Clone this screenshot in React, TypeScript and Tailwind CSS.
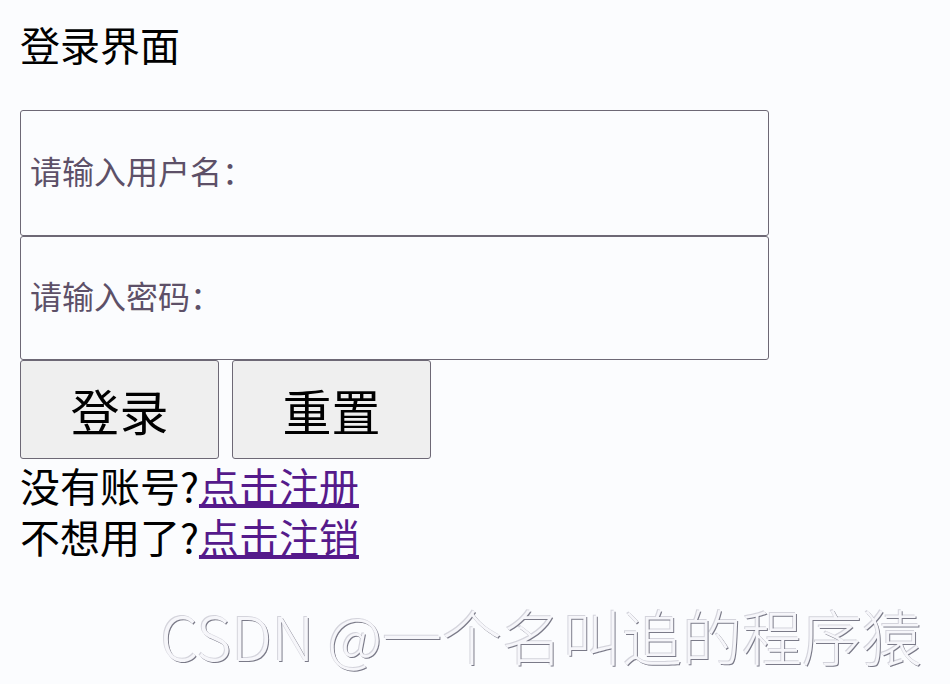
const font = "font-['Microsoft_YaHei','Noto_Sans_CJK_SC',sans-serif]";

function LoginForm() {
  return (
    <form className="flex flex-col" onSubmit={(e) => e.preventDefault()}>
      <input
        type="text"
        placeholder="请输入用户名："
        className={`${font} h-[126px] w-[749px] rounded-[3px] border-[1.5px] border-[#6d6875] bg-[#fbfcfe] pr-[10px] pb-[6px] pl-[9px] text-[32px] outline-none placeholder:text-[#5d5068]`}
      />
      <input
        type="password"
        placeholder="请输入密码："
        className={`${font} h-[124px] w-[749px] rounded-[3px] border-[1.5px] border-[#6d6875] bg-[#fbfcfe] pr-[10px] pb-[6px] pl-[9px] text-[32px] outline-none placeholder:text-[#5d5068]`}
      />
      <div className="flex gap-[13px]">
        <button
          type="submit"
          className={`${font} h-[99px] w-[199px] rounded-[3px] border-[1.5px] border-[#6d6875] bg-[#efefef] text-[49px] text-black`}
        >
          登录
        </button>
        <button
          type="reset"
          className={`${font} h-[99px] w-[199px] rounded-[3px] border-[1.5px] border-[#6d6875] bg-[#efefef] text-[49px] text-black`}
        >
          重置
        </button>
      </div>
    </form>
  );
}

export default function App() {
  return (
    <div className={`${font} relative h-[684px] w-[950px] overflow-hidden bg-[#fbfcfe] px-[20px] text-black`}>
      <h1 className="pt-[20px] text-[40px] leading-[48px] font-normal">登录界面</h1>
      <div className="mt-[42px]">
        <LoginForm />
      </div>
      <div className="mt-px text-[40px] leading-[51px]">
        <div>
          没有账号?<a href="#" className="text-[#551a8b] underline">点击注册</a>
        </div>
        <div>
          不想用了?<a href="#" className="text-[#551a8b] underline">点击注销</a>
        </div>
      </div>
      <div className="absolute right-[28px] bottom-[17px] text-[60px] leading-[64px] font-light text-[#f6f6fa] [text-shadow:1px_1px_0_#7a7a88,-1px_-1px_0_#d4d4dc]">
        CSDN @一个名叫追的程序猿
      </div>
    </div>
  );
}
